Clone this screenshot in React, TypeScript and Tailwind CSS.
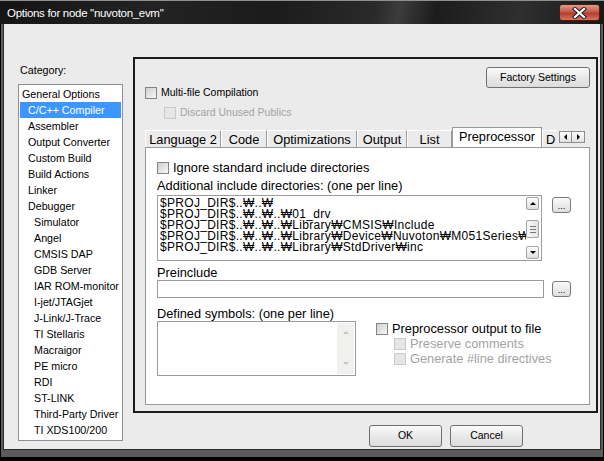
import type { ReactNode } from "react";

const categories: [string, number][] = [
  ["General Options", 0],
  ["C/C++ Compiler", 1],
  ["Assembler", 1],
  ["Output Converter", 1],
  ["Custom Build", 1],
  ["Build Actions", 1],
  ["Linker", 1],
  ["Debugger", 1],
  ["Simulator", 2],
  ["Angel", 2],
  ["CMSIS DAP", 2],
  ["GDB Server", 2],
  ["IAR ROM-monitor", 2],
  ["I-jet/JTAGjet", 2],
  ["J-Link/J-Trace", 2],
  ["TI Stellaris", 2],
  ["Macraigor", 2],
  ["PE micro", 2],
  ["RDI", 2],
  ["ST-LINK", 2],
  ["Third-Party Driver", 2],
  ["TI XDS100/200", 2],
];

const indent = ["pl-[2px]", "pl-[8px]", "pl-[14px]"];

const tabs: [string, string][] = [
  ["Language 2", "w-[76px]"],
  ["Code", "w-[46px]"],
  ["Optimizations", "w-[90px]"],
  ["Output", "w-[50px]"],
  ["List", "w-[45px]"],
];

const includeDirs = [
  "$PROJ_DIR$..₩..₩",
  "$PROJ_DIR$..₩..₩..₩01_drv",
  "$PROJ_DIR$..₩..₩..₩Library₩CMSIS₩Include",
  "$PROJ_DIR$..₩..₩..₩Library₩Device₩Nuvoton₩M051Series₩Include",
  "$PROJ_DIR$..₩..₩..₩Library₩StdDriver₩inc",
];

function Check({ disabled }: { disabled?: boolean }) {
  return (
    <span
      className={`block h-[12px] w-[12px] shrink-0 border ${
        disabled
          ? "border-[#c9c9c9] bg-[#e6e6e6]"
          : "border-[#858585] bg-[linear-gradient(135deg,#cfcfcf,#f7f7f7)]"
      }`}
    />
  );
}

function Button({ className, children }: { className: string; children: ReactNode }) {
  return (
    <div
      className={`flex items-center justify-center rounded-[3px] border border-[#707070] bg-[linear-gradient(#fbfbfb,#e9e9e9_50%,#dcdcdc)] text-[10.5px] ${className}`}
    >
      {children}
    </div>
  );
}

function Dots() {
  return (
    <div className="flex h-[16px] w-[19px] shrink-0 items-end justify-center rounded-[3px] border border-[#7a7a7a] bg-[linear-gradient(#fafafa,#dedede)] pb-[2px] text-[9px] leading-[8px]">
      ...
    </div>
  );
}

function Arrow({ dir, color }: { dir: "up" | "down" | "left" | "right"; color: string }) {
  const pts = {
    up: "1,5 4,2 7,5",
    down: "1,2 4,5 7,2",
    left: "5,1 2,4 5,7",
    right: "3,1 6,4 3,7",
  }[dir];
  return (
    <svg width="8" height="8" viewBox="0 0 8 8">
      <polygon points={pts} fill={color} />
    </svg>
  );
}

export default function App() {
  return (
    <div className="flex h-[461px] w-[604px] flex-col overflow-hidden bg-black font-['Liberation_Sans',Arial,sans-serif] text-black">
      <header className="relative flex h-[24px] shrink-0 items-center border-t border-[#8f8f8f] bg-[linear-gradient(100deg,#141414_0%,#232323_25%,#1b1b1b_45%,#2a2a2a_62%,#3c3c3c_66%,#1c1c1c_72%,#2f2f2f_86%,#171717_100%)] pl-[7px] pt-[3px]">
        <span className="text-[11.5px] tracking-[-0.3px] text-white">Options for node "nuvoton_evm"</span>
        <div className="absolute right-[4px] top-[3px] flex h-[17px] w-[41px] items-center justify-center rounded-[3px] border border-[#4a1a12] bg-[linear-gradient(#e7988a,#c9594a_45%,#b43d2d_55%,#d9735f)]">
          <svg width="15" height="12" viewBox="0 0 15 12">
            <path d="M3 2 L12 10 M12 2 L3 10" stroke="#222" strokeWidth="4.2" strokeLinecap="square" />
            <path d="M3 2 L12 10 M12 2 L3 10" stroke="#fff" strokeWidth="2.2" strokeLinecap="square" />
          </svg>
        </div>
      </header>

      <div className="flex flex-1 flex-col border-x border-b-4 border-black bg-[#5c5c5c] px-[2px] pb-[7px]">
        <div className="flex flex-1 border-x border-b border-[#2a2a2a] bg-[#ebebeb]">
          {/* category list */}
          <div className="flex flex-col pl-[14px] pt-[40px]">
            <p className="ml-[2px] text-[10.7px] leading-[13px]">Category:</p>
            <ul className="mt-[7px] h-[357px] w-[105px] border border-[#8f8f8f] bg-white p-[1px] text-[10.7px]">
              {categories.map(([name, level]) => (
                <li
                  key={name}
                  className={`flex h-[16px] items-center whitespace-nowrap ${indent[level]} ${
                    name === "C/C++ Compiler" ? "bg-[#3d95ff] text-white" : ""
                  }`}
                >
                  {name}
                </li>
              ))}
            </ul>
          </div>

          {/* options */}
          <div className="ml-[10px] flex flex-1 flex-col">
            <section className="mt-[33px] flex h-[356px] w-[465px] flex-col border-2 border-[#1b1b1b] pl-[10px] pr-[6px] pt-[8px]">
              <Button className="h-[21px] w-[104px] self-end">Factory Settings</Button>

              <label className="mt-[-2px] flex h-[13px] items-center gap-[4px] text-[10.5px]">
                <Check />
                Multi-file Compilation
              </label>
              <label className="ml-[19px] mt-[7px] flex h-[13px] items-center gap-[4px] text-[10.5px] text-[#a3a3a3]">
                <Check disabled />
                Discard Unused Publics
              </label>

              <div className="relative mt-[8px] flex h-[20px] items-end overflow-hidden text-[12.8px]">
                {tabs.map(([name, w]) => (
                  <div
                    key={name}
                    className={`flex h-[17px] shrink-0 items-center justify-center border-l border-r border-t border-l-white border-r-[#9d9d9d] border-t-white pt-[1px] leading-[16px] ${w}`}
                  >
                    {name}
                  </div>
                ))}
                <div className="relative z-10 mb-[-1px] flex h-[21px] w-[90px] shrink-0 items-start justify-center border border-b-0 border-[#919b9c] bg-white pt-[1px] leading-[16px]">
                  Preprocessor
                </div>
                <div className="flex h-[17px] w-[15px] shrink-0 items-center overflow-hidden border-l border-t border-l-white border-t-white pl-[3px] pt-[1px] leading-[16px]">
                  D
                </div>
                <div className="absolute right-[5px] top-[4px] flex">
                  <div className="flex h-[12px] w-[13px] items-center justify-center border border-[#8e8e8e] bg-[linear-gradient(#fdfdfd,#e2e2e2)]">
                    <Arrow dir="left" color="#000" />
                  </div>
                  <div className="flex h-[12px] w-[13px] items-center justify-center border border-l-0 border-[#8e8e8e] bg-[linear-gradient(#fdfdfd,#e2e2e2)]">
                    <Arrow dir="right" color="#000" />
                  </div>
                </div>
              </div>

              <div className="flex h-[258px] flex-col border border-[#919b9c] bg-white pl-[11px] pt-[12px] text-[12.8px]">
                <label className="flex h-[15px] items-center gap-[4px]">
                  <Check />
                  Ignore standard include directories
                </label>
                <p className="mt-[3px] leading-[15px]">Additional include directories: (one per line)</p>
                <div className="mt-[2px] flex items-start gap-[10px]">
                  <div className="flex h-[66px] w-[385px] border border-[#9c9c9c]">
                    <div className="flex-1 overflow-hidden whitespace-nowrap pl-[2px] pt-[2px] text-[12px] leading-[11px] tracking-[0.3px]">
                      {includeDirs.map((d) => (
                        <div key={d}>{d}</div>
                      ))}
                    </div>
                    <div className="mr-[2px] flex w-[13px] flex-col py-[1px]">
                      <div className="flex h-[13px] items-center justify-center rounded-[2px] border border-[#a4a4a4] bg-[linear-gradient(#fdfdfd,#dedede)]">
                        <Arrow dir="up" color="#000" />
                      </div>
                      <div className="mt-[10px] flex h-[18px] flex-col items-center justify-center gap-[2px] rounded-[2px] border border-[#a4a4a4] bg-[linear-gradient(90deg,#f8f8f8,#e4e4e4)]">
                        <span className="h-px w-[6px] bg-[#777]" />
                        <span className="h-px w-[6px] bg-[#777]" />
                        <span className="h-px w-[6px] bg-[#777]" />
                      </div>
                      <div className="mt-auto flex h-[13px] items-center justify-center rounded-[2px] border border-[#a4a4a4] bg-[linear-gradient(#fdfdfd,#dedede)]">
                        <Arrow dir="down" color="#000" />
                      </div>
                    </div>
                  </div>
                  <div className="mt-[2px]">
                    <Dots />
                  </div>
                </div>

                <p className="mt-[5px] leading-[14px]">Preinclude</p>
                <div className="flex items-start gap-[8px]">
                  <div className="h-[18px] w-[387px] border border-[#9c9c9c]" />
                  <div className="mt-[1px]">
                    <Dots />
                  </div>
                </div>

                <div className="mt-[8px] flex">
                  <div className="flex w-[199px] flex-col">
                    <p className="leading-[15px]">Defined symbols: (one per line)</p>
                    <div className="flex h-[55px] justify-end border border-[#9c9c9c]">
                      <div className="my-[1px] mr-[1px] flex w-[17px] flex-col items-center justify-between bg-[#f1f1ef] py-[6px]">
                        <Arrow dir="up" color="#c4c4c4" />
                        <Arrow dir="down" color="#c4c4c4" />
                      </div>
                    </div>
                  </div>
                  <div className="ml-[20px] flex flex-col pt-[15px]">
                    <label className="flex h-[15px] items-center gap-[4px]">
                      <Check />
                      Preprocessor output to file
                    </label>
                    <label className="ml-[18px] flex h-[15px] items-center gap-[4px] text-[#a3a3a3]">
                      <Check disabled />
                      Preserve comments
                    </label>
                    <label className="ml-[18px] flex h-[15px] items-center gap-[4px] text-[#a3a3a3]">
                      <Check disabled />
                      Generate #line directives
                    </label>
                  </div>
                </div>
              </div>
            </section>

            <div className="mt-[12px] flex gap-[8px] pl-[236px]">
              <Button className="h-[22px] w-[73px]">OK</Button>
              <Button className="h-[22px] w-[73px]">Cancel</Button>
            </div>
          </div>
        </div>
      </div>
    </div>
  );
}
